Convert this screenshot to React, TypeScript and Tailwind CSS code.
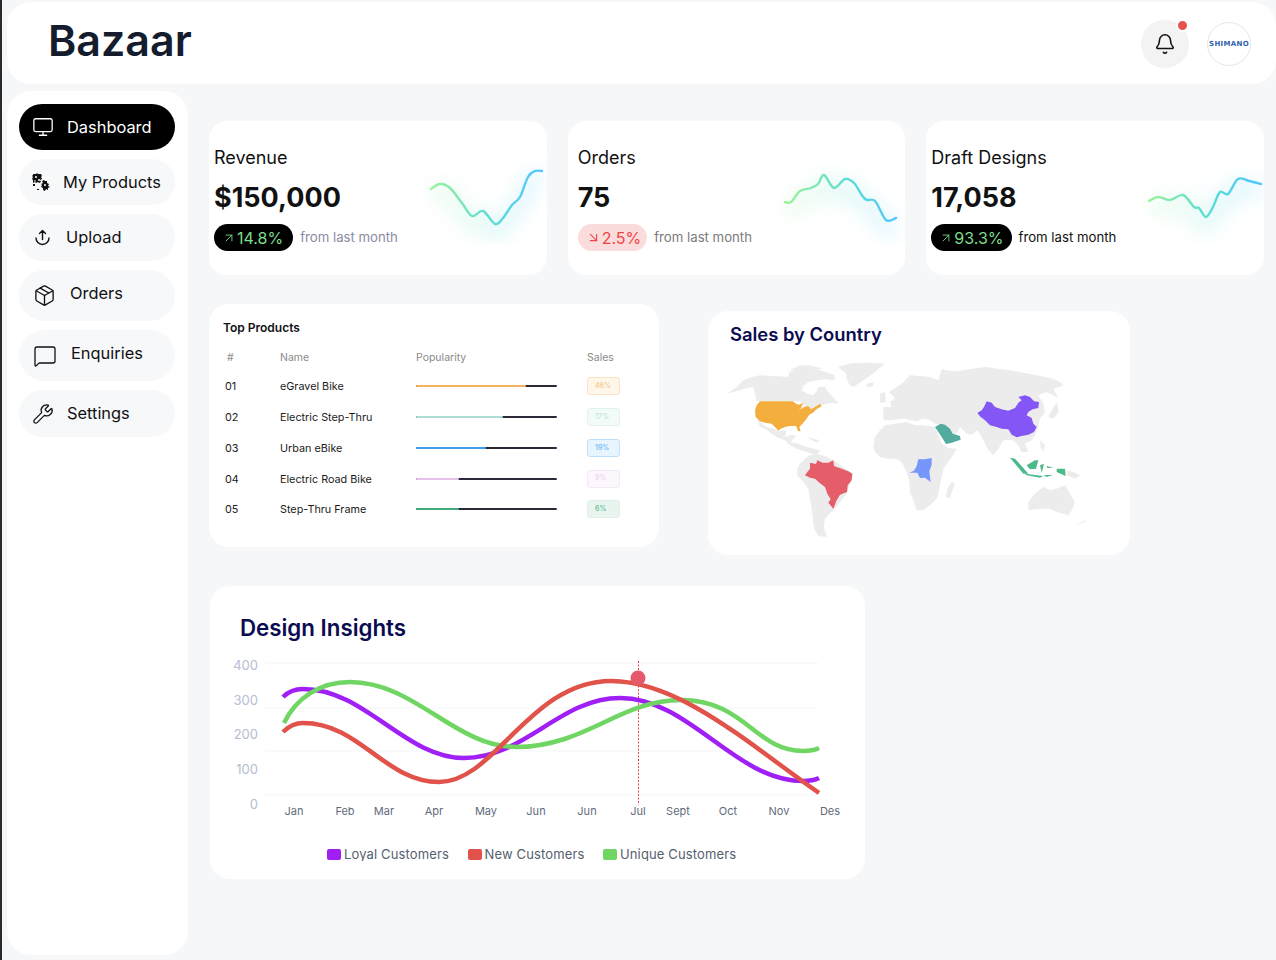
import { ArrowDownRight, ArrowUpRight, Bell, MessageSquare, Monitor, Package, Wrench } from 'lucide-react';

type Pt = [number, number];

// smooth line through points (catmull-rom to bezier)
const smooth = (p: Pt[]) => {
  let d = `M${p[0][0]} ${p[0][1]}`;
  for (let i = 0; i < p.length - 1; i++) {
    const a = p[i - 1] || p[i];
    const b = p[i];
    const c = p[i + 1];
    const e = p[i + 2] || c;
    d += ` C${(b[0] + (c[0] - a[0]) / 6).toFixed(1)} ${(b[1] + (c[1] - a[1]) / 6).toFixed(1)} ${(c[0] - (e[0] - b[0]) / 6).toFixed(1)} ${(c[1] - (e[1] - b[1]) / 6).toFixed(1)} ${c[0]} ${c[1]}`;
  }
  return d;
};

const PuzzleIcon = () => (
  <svg width="20" height="20" viewBox="0 0 20 20" fill="#111">
    <path d="M2 2h3l1-1 1 1h3l1 2-1 1 1 2-2 1 1 2-2 1-1-1-2 1-1-1-2 1 0-3-1-1 1-2-1-1 1-1z" />
    <path d="M11 9l2-1 1 1 2 0 0 2 2 1-1 2 2 1-2 1 0 2-2-1-1 2-2-1 0-2-2-1 1-2-1-1 2-1z" />
    <path d="M6 17h2v1H6zM2 12h2v2H2z" />
    <circle cx="5" cy="5" r="1" fill="#fff" />
    <circle cx="8" cy="8" r="1" fill="#fff" />
    <circle cx="4" cy="9" r="0.8" fill="#fff" />
    <circle cx="14" cy="13" r="1" fill="#fff" />
  </svg>
);

const UploadIcon = () => (
  <svg width="17" height="17" viewBox="0 0 17 17" fill="none" stroke="#111" strokeWidth="1.4" strokeLinecap="round" strokeLinejoin="round">
    <path d="M8.5 1.5v9M5.5 4.5l3-3 3 3" />
    <path d="M2 9a6.5 6.5 0 0 0 13 0" />
  </svg>
);

const nav = [
  { label: 'My Products', icon: <PuzzleIcon />, box: 'h-[46px] pl-[12px] gap-[12px]', text: '' },
  { label: 'Upload', icon: <UploadIcon />, box: 'h-[47px] pl-[15px] gap-[15px]', text: '' },
  { label: 'Orders', icon: <Package size={23} strokeWidth={1.4} />, box: 'h-[51px] pl-[14px] gap-[14px]', text: 'mb-[4px]' },
  { label: 'Enquiries', icon: <MessageSquare size={24} strokeWidth={1.3} />, box: 'h-[51px] pl-[14px] gap-[14px]', text: 'mb-[4px]' },
  { label: 'Settings', icon: <Wrench size={22} strokeWidth={1.4} />, box: 'h-[47px] pl-[13px] gap-[13px]', text: '' },
];

const stats = [
  {
    id: 'rev', title: 'Revenue', value: '$150,000', pct: '14.8%', up: true, pad: 'pl-[5px]', note: 'text-[#8a8ca3]', pill: 'pr-[10px]', left: 405,
    line: [[431, 189], [440, 184], [450, 188], [462, 203], [472, 216], [483, 211], [495, 224], [503, 218], [512, 205], [520, 197], [528, 177], [535, 171], [542, 171]] as Pt[],
  },
  {
    id: 'ord', title: 'Orders', value: '75', pct: '2.5%', up: false, pad: 'pl-[10px]', note: 'text-[#7b7b7b]', pill: 'pr-[6px]', left: 763,
    line: [[785, 202], [791, 202], [800, 191], [811, 188], [818, 184], [824, 175], [834, 188], [845, 179], [854, 183], [865, 199], [875, 201], [886, 220], [896, 218]] as Pt[],
  },
  {
    id: 'dft', title: 'Draft Designs', value: '17,058', pct: '93.3%', up: true, pad: 'pl-[5px]', note: 'text-[#111]', pill: 'pr-[8px]', left: 1122,
    line: [[1149, 201], [1158, 197], [1170, 200], [1183, 195], [1194, 207], [1199, 208], [1206, 217], [1213, 207], [1220, 192], [1228, 194], [1238, 179], [1249, 181], [1261, 184]] as Pt[],
  },
];

const Spark = ({ id, left, line }: { id: string; left: number; line: Pt[] }) => {
  const d = smooth(line);
  return (
    <svg width="142" height="100" viewBox={`${left} 145 142 100`} className="mt-[24px] shrink-0">
      <defs>
        <linearGradient id={`g-${id}`} gradientUnits="userSpaceOnUse" x1={left + 24} y1="0" x2={left + 136} y2="0">
          <stop offset="0" stopColor="#9df29a" />
          <stop offset="0.55" stopColor="#5bdcd4" />
          <stop offset="1" stopColor="#52c6ff" />
        </linearGradient>
        <filter id={`b-${id}`} x="-30%" y="-60%" width="160%" height="220%">
          <feGaussianBlur stdDeviation="9" />
        </filter>
      </defs>
      <path d={d} fill="none" stroke={`url(#g-${id})`} strokeWidth="20" opacity="0.14" filter={`url(#b-${id})`} transform="translate(0 8)" />
      <path d={d} fill="none" stroke={`url(#g-${id})`} strokeWidth="2.4" strokeLinecap="round" />
    </svg>
  );
};

const products = [
  { no: '01', name: 'eGravel Bike', pct: '46%', w: 'w-[110px]', bar: 'bg-[#f2b662]', badge: 'bg-[#fff6ea] border-[#fbe3c4] text-[#f6c88a]' },
  { no: '02', name: 'Electric Step-Thru', pct: '17%', w: 'w-[87px]', bar: 'bg-[#afdcd2]', badge: 'bg-[#f3fbf8] border-[#e0f3ee] text-[#bfe6dc]' },
  { no: '03', name: 'Urban eBike', pct: '19%', w: 'w-[70px]', bar: 'bg-[#3f9fee]', badge: 'bg-[#e8f4fe] border-[#bfe0fb] text-[#6db9f5]' },
  { no: '04', name: 'Electric Road Bike', pct: '9%', w: 'w-[43px]', bar: 'bg-[#e6c2ea]', badge: 'bg-[#fcf6fd] border-[#f5e8f7] text-[#ecd5ef]' },
  { no: '05', name: 'Step-Thru Frame', pct: '6%', w: 'w-[43px]', bar: 'bg-[#3fab7b]', badge: 'bg-[#e8f5ef] border-[#e2efe9] text-[#5cc092]' },
];

const land = [
  '385,165 405,158 430,153 480,152 525,155 505,170 495,180 475,195 460,205 445,215 430,225 418,218 410,200 408,185',
  '50,245 80,225 100,205 125,195 150,190 190,192 235,195 238,180 262,172 290,170 320,172 340,178 375,190 372,205 345,202 320,205 295,210 280,222 275,235 292,245 310,250 320,238 325,225 345,225 355,240 375,262 385,275 360,272 335,280 320,295 305,292 290,285 270,268 140,268 135,245 130,225 110,228 90,235',
  '135,300 150,330 170,345 195,352 205,358 230,355 225,375 245,368 260,372 240,390 265,395 290,405 330,415 320,430 290,420 260,410 240,400 225,385 205,378 185,365 165,350 150,345',
  '262,470 270,455 285,440 300,430 320,425 345,432 370,445 400,465 428,485 420,515 410,545 390,570 375,590 358,605 345,620 342,640 345,660 352,675 325,672 315,655 310,640 308,615 305,590 300,560 295,530 280,510 262,490',
  '495,375 510,355 525,340 555,335 590,330 615,340 640,340 675,345 685,370 695,395 715,408 740,410 725,435 700,470 695,495 690,520 685,545 680,560 660,580 640,595 620,595 612,570 600,540 598,510 590,480 575,450 560,440 535,440 510,435 495,420 490,405',
  '725,510 735,515 728,535 720,558 708,555 712,530',
  '520,285 545,285 540,270 555,258 535,240 550,232 575,215 600,190 630,192 660,195 685,205 695,172 730,178 760,175 800,168 830,165 870,172 900,175 940,182 980,190 1020,198 1050,210 1060,220 1030,230 1045,260 1030,250 1010,240 995,245 985,250 1000,275 1005,300 990,320 985,345 975,370 965,385 945,395 955,420 935,420 925,400 910,385 895,385 880,385 865,410 850,430 835,415 825,395 810,365 800,355 785,368 770,365 750,345 740,365 725,375 710,360 695,340 675,335 655,322 640,320 620,328 600,325 585,320 570,320 545,325 520,325',
  '510,245 525,240 528,270 510,272',
  '1015,315 1025,295 1040,270 1047,300 1030,320',
  '955,570 975,545 1000,525 1020,535 1040,530 1065,520 1080,545 1095,570 1085,595 1075,610 1040,600 1020,590 1000,590 975,592 955,595',
  '1095,640 1135,620 1120,632',
  '990,385 1005,400 1000,420 992,405',
  '1070,475 1090,480 1110,490 1095,500 1070,490',
  '240,175 270,160 300,160 340,170 290,175',
  '290,375 330,385 320,392',
  '470,215 490,210 490,222 472,225',
];

const countries = [
  { fill: '#f4ae3d', pts: ['150,268 248,268 258,275 268,278 280,272 272,290 262,298 282,285 295,282 303,292 315,285 330,275 335,283 318,292 312,300 298,308 290,320 280,332 268,345 272,358 265,358 258,342 240,342 225,345 212,350 205,356 195,345 185,335 165,332 150,328 137,315 135,295 140,280'] },
  { fill: '#8456f5', pts: ['802,303 815,295 822,285 830,268 845,272 855,285 875,292 895,296 915,288 925,272 935,265 925,255 945,250 960,255 972,268 987,270 985,288 968,292 955,300 950,310 965,318 970,335 980,345 972,360 955,368 935,372 920,376 905,368 895,352 875,350 860,345 840,340 825,325 812,315'] },
  { fill: '#52ab9d', pts: ['675,345 692,335 705,338 720,350 728,365 750,372 752,383 725,392 708,396 695,375'] },
  { fill: '#e45d68', pts: ['285,490 292,480 300,470 300,452 318,456 322,445 338,452 355,452 370,445 372,462 395,470 415,478 427,485 425,505 413,520 411,540 390,548 380,565 370,590 355,572 362,562 352,545 345,525 328,512 315,500 300,497'] },
  { fill: '#7597fa', pts: ['598,482 612,476 620,462 625,442 645,442 665,438 665,458 658,478 660,495 662,510 645,497 630,498 622,482'] },
  { fill: '#4bb98a', pts: ['900,437 915,440 955,485 940,485', '945,485 1000,492 990,497 950,490', '950,460 975,445 985,445 978,470 960,472', '990,460 1002,455 995,482', '1040,470 1065,470 1067,492 1040,480', '1010,462 1030,467 1012,468', '1000,490 1030,488 1010,495'] },
];

const purple = 'M283 697 C288 692 295 689 303 689 C365 689 405 758 464 758 C525 758 560 698 620 698 C690 698 735 781 803 781 C810 781 815 780 819 778';
const green = 'M284 723 C296 698 320 682 350 682 C415 682 455 747 516 747 C585 747 620 700 681 700 C745 700 755 751 803 751 C810 751 815 750 819 748';
const red = 'M283 732 C288 727 295 723 303 723 C360 723 385 782 439 782 C495 782 530 681 611 681 C680 681 750 745 819 793';

const yTicks: [string, number][] = [['400', 670], ['300', 705], ['200', 739], ['100', 774], ['0', 809]];
const xTicks: [string, number][] = [['Jan', 294], ['Feb', 345], ['Mar', 384], ['Apr', 434], ['May', 486], ['Jun', 536], ['Jun', 587], ['Jul', 638], ['Sept', 678], ['Oct', 728], ['Nov', 779], ['Des', 830]];

const legend = [
  { label: 'Loyal Customers', color: 'bg-[#a01ff5]' },
  { label: 'New Customers', color: 'bg-[#e0524a]' },
  { label: 'Unique Customers', color: 'bg-[#70d663]' },
];

export default function App() {
  return (
    <div className="w-[1276px] h-[960px] overflow-hidden bg-[#f6f7f9] border-l-2 border-[#2b2b2b] pt-[2px] font-['Inter',sans-serif] text-[#111]">
      {/* Header */}
      <header className="ml-[5px] h-[82px] rounded-[24px] bg-white flex items-center justify-between pl-[41px] pr-[25px]">
        <h1 className="text-[43px] font-semibold text-[#141c2e] leading-none -mt-[5px]">Bazaar</h1>
        <div className="flex items-center gap-[18px] mt-[2px]">
          <div className="relative w-[48px] h-[48px] rounded-full bg-[#f3f3f3] flex items-center justify-center">
            <Bell size={22} strokeWidth={1.7} />
            <span className="absolute top-[-1px] right-0 w-[13px] h-[13px] rounded-full bg-[#e5534b] border-[2px] border-white" />
          </div>
          <div className="w-[44px] h-[44px] rounded-full border border-[#e6e6e6] flex items-center justify-center text-[7px] font-bold text-[#2f62ad] font-['DejaVu_Sans',sans-serif] tracking-[0.3px]">
            SHIMANO
          </div>
        </div>
      </header>

      <div className="flex items-start">
        {/* Sidebar */}
        <aside className="ml-[5px] mt-[7px] w-[181px] h-[864px] rounded-[24px] bg-white pt-[13px] pl-[12px] shrink-0">
          <div className="flex flex-col gap-[9px] w-[156px]">
            <div className="h-[46px] rounded-full bg-black text-white flex items-center pl-[13px] gap-[13px] text-[16.4px]">
              <Monitor size={22} strokeWidth={1.4} />
              <span>Dashboard</span>
            </div>
            {nav.map((n) => (
              <div key={n.label} className={`${n.box} rounded-full bg-[#f7f8fa] flex items-center text-[16.4px]`}>
                {n.icon}
                <span className={n.text}>{n.label}</span>
              </div>
            ))}
          </div>
        </aside>

        {/* Main */}
        <main className="pl-[21px] flex-1 min-w-0">
          <section className="mt-[37px] w-[1055px] grid grid-cols-3 gap-[21px]">
            {stats.map((s) => (
              <div key={s.id} className={`${s.pad} h-[154px] rounded-[18px] bg-white flex justify-between overflow-hidden`}>
                <div className="pt-[26px] whitespace-nowrap">
                  <div className="text-[18px] leading-[22px]">{s.title}</div>
                  <div className="mt-[12px] text-[27px] leading-[34px] font-bold">{s.value}</div>
                  <div className="mt-[9px] flex items-center gap-[7px]">
                    <span className={`${s.pill} h-[27px] pl-[8px] rounded-full flex items-center gap-[1px] text-[16px] ${s.up ? 'bg-black text-[#7ddc8e]' : 'bg-[#fadcdc] text-[#ef4444]'}`}>
                      {s.up ? <ArrowUpRight size={14} strokeWidth={1.5} /> : <ArrowDownRight size={15} strokeWidth={1.8} />}
                      {s.pct}
                    </span>
                    <span className={`text-[13.2px] ${s.note}`}>from last month</span>
                  </div>
                </div>
                <Spark id={s.id} left={s.left} line={s.line} />
              </div>
            ))}
          </section>

          <section className="mt-[29px] flex items-start">
            {/* Top products */}
            <div className="w-[450px] h-[243px] rounded-[20px] bg-white pt-[17px] pl-[14px]">
              <h2 className="text-[12px] leading-[14px] font-semibold">Top Products</h2>
              <div className="mt-[16px] grid grid-cols-[57px_136px_171px_1fr] text-[10.5px] leading-[14px] text-[#8a8a8a]">
                <span className="pl-[4px]">#</span>
                <span>Name</span>
                <span>Popularity</span>
                <span>Sales</span>
              </div>
              <div className="mt-[6px]">
                {products.map((p) => (
                  <div key={p.no} className="h-[30.75px] grid grid-cols-[57px_136px_171px_1fr] items-center text-[10.8px] text-[#1b1b1b]">
                    <span className="pl-[2px] pt-[2px]">{p.no}</span>
                    <span className="pt-[2px]">{p.name}</span>
                    <div className="w-[141px] h-[2px] rounded-full bg-[#2a2a38]">
                      <div className={`${p.w} ${p.bar} h-[2px] rounded-full`} />
                    </div>
                    <span className={`${p.badge} w-[33px] h-[18px] rounded-[3px] border flex items-center pl-[7px] text-[7px] font-medium`}>{p.pct}</span>
                  </div>
                ))}
              </div>
            </div>

            {/* Sales by country */}
            <div className="ml-[49px] mt-[7px] w-[422px] h-[244px] rounded-[20px] bg-white pt-[10px]">
              <h2 className="pl-[22px] text-[18.4px] leading-[26px] font-semibold text-[#0b0b52]">Sales by Country</h2>
              <svg width="420" height="200" viewBox="0 120 1260 600" className="ml-[2px] mt-[5px]">
                {land.map((pts) => (
                  <polygon key={pts} points={pts} fill="#ececec" />
                ))}
                {countries.map((c) => c.pts.map((pts) => <polygon key={pts} points={pts} fill={c.fill} />))}
              </svg>
            </div>
          </section>

          {/* Design insights */}
          <section className="mt-[31px] ml-[1px] w-[655px] h-[293px] rounded-[20px] bg-white pt-[27px]">
            <h2 className="pl-[30px] text-[22.3px] leading-[30px] font-semibold text-[#0b0b52]">Design Insights</h2>
            <svg width="655" height="175" viewBox="210 645 655 175" className="mt-[2px] font-['Inter',sans-serif]">
              {[663, 708, 751, 795].map((y) => (
                <line key={y} x1="265" x2="818" y1={y} y2={y} stroke="#f4f5f7" strokeWidth="1" />
              ))}
              {yTicks.map(([t, y]) => (
                <text key={t} x="258" y={y} textAnchor="end" fontSize="13" fill="#b4bdd1">{t}</text>
              ))}
              {xTicks.map(([t, x], i) => (
                <text key={i} x={x} y="815" textAnchor="middle" fontSize="11" fill="#5f6b7a">{t}</text>
              ))}
              <line x1="638.5" x2="638.5" y1="661" y2="805" stroke="#ef4444" strokeWidth="1" strokeDasharray="2 1.5" />
              <path d={purple} fill="none" stroke="#a01ff5" strokeWidth="4.5" />
              <path d={green} fill="none" stroke="#70d663" strokeWidth="4.5" />
              <path d={red} fill="none" stroke="#e0524a" strokeWidth="4.5" />
              <circle cx="638" cy="678" r="7.5" fill="#e5596a" />
            </svg>
            <div className="mt-[27px] pl-[117px] flex items-center gap-[18.5px]">
              {legend.map((l) => (
                <div key={l.label} className="flex items-center gap-[3px]">
                  <span className={`${l.color} w-[14px] h-[11px] rounded-[2px]`} />
                  <span className="h-[14px] leading-[15px] overflow-hidden text-[13px] tracking-[0.14px] text-[#55606e]">{l.label}</span>
                </div>
              ))}
            </div>
          </section>
        </main>
      </div>
    </div>
  );
}
